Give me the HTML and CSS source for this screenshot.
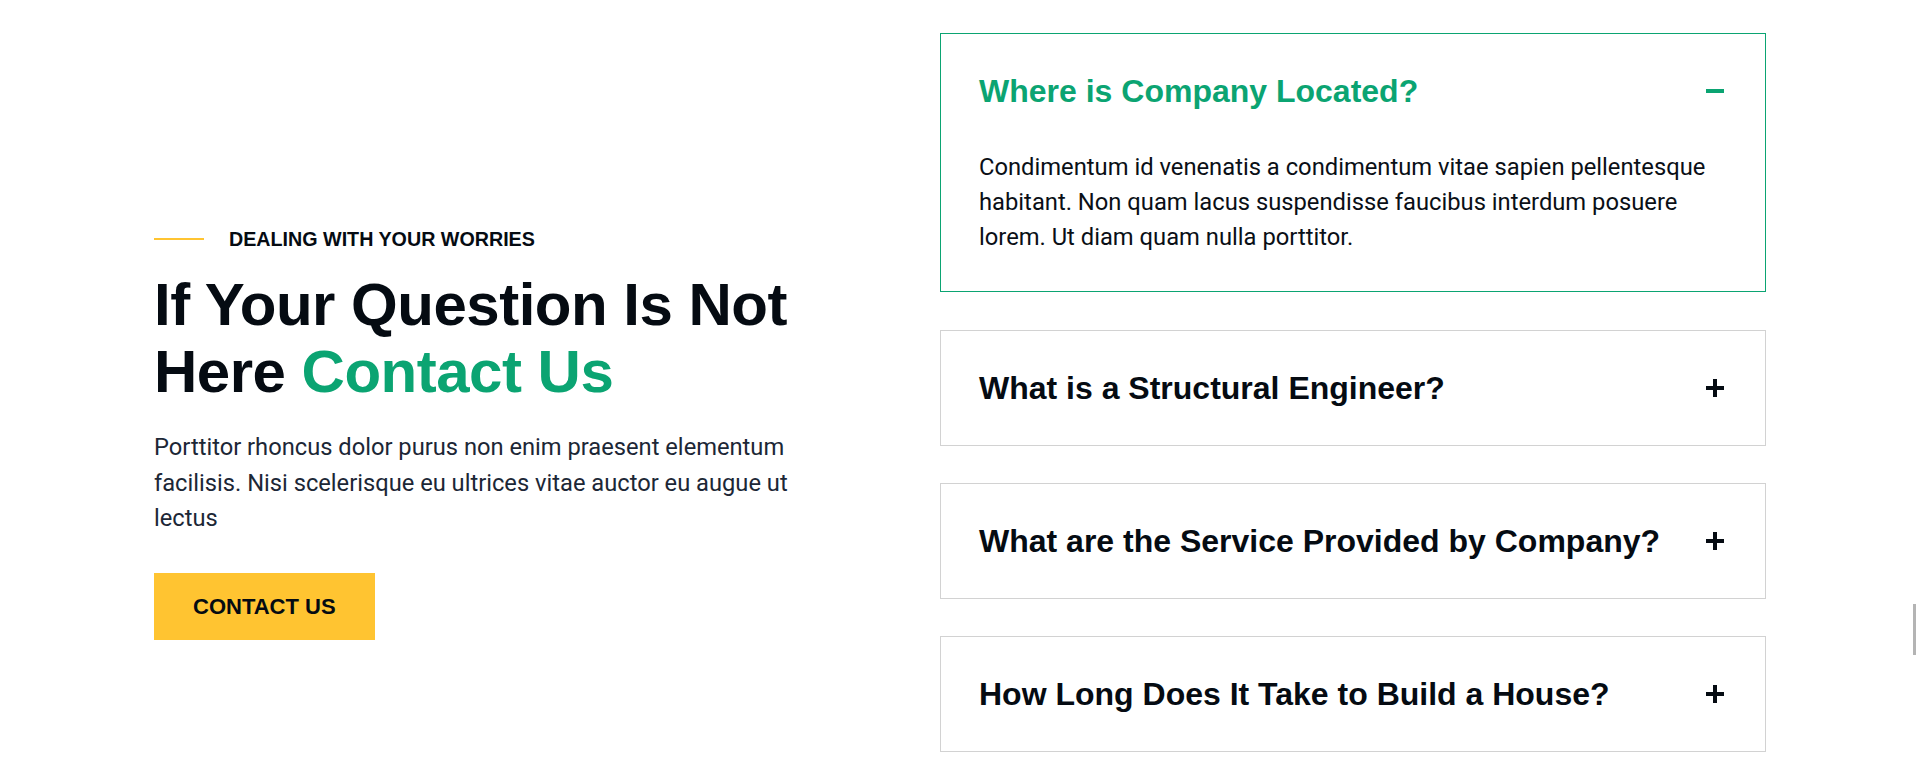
FILE: index.html
```html
<!DOCTYPE html>
<html lang="en">
<head>
<meta charset="utf-8">
<title>FAQ</title>
<link rel="stylesheet" href="styles.css">
</head>
<body>
<section class="faq-section">
  <div class="intro">
    <div class="subtitle">
      <span class="subtitle-line"></span>
      <span class="subtitle-text">DEALING WITH YOUR WORRIES</span>
    </div>
    <h2 class="intro-title">If Your Question Is Not Here <span class="accent">Contact Us</span></h2>
    <p class="intro-text">Porttitor rhoncus dolor purus non enim praesent elementum facilisis. Nisi scelerisque eu ultrices vitae auctor eu augue ut lectus</p>
    <a class="btn" href="#">CONTACT US</a>
  </div>

  <div class="faq">
    <div class="faq-item open">
      <div class="faq-head">
        <h3 class="faq-title">Where is Company Located?</h3>
        <svg class="faq-icon" width="18" height="18" viewBox="0 0 18 18"><rect x="0" y="7" width="18" height="4" fill="#0ba472"/></svg>
      </div>
      <div class="faq-body">
        <p>Condimentum id venenatis a condimentum vitae sapien pellentesque habitant. Non quam lacus suspendisse faucibus interdum posuere lorem. Ut diam quam nulla porttitor.</p>
      </div>
    </div>
    <div class="faq-item">
      <div class="faq-head">
        <h3 class="faq-title">What is a Structural Engineer?</h3>
        <svg class="faq-icon" width="18" height="18" viewBox="0 0 18 18"><rect x="0" y="7" width="18" height="4" fill="#050b12"/><rect x="7" y="0" width="4" height="18" fill="#050b12"/></svg>
      </div>
    </div>
    <div class="faq-item">
      <div class="faq-head">
        <h3 class="faq-title">What are the Service Provided by Company?</h3>
        <svg class="faq-icon" width="18" height="18" viewBox="0 0 18 18"><rect x="0" y="7" width="18" height="4" fill="#050b12"/><rect x="7" y="0" width="4" height="18" fill="#050b12"/></svg>
      </div>
    </div>
    <div class="faq-item">
      <div class="faq-head">
        <h3 class="faq-title">How Long Does It Take to Build a House?</h3>
        <svg class="faq-icon" width="18" height="18" viewBox="0 0 18 18"><rect x="0" y="7" width="18" height="4" fill="#050b12"/><rect x="7" y="0" width="4" height="18" fill="#050b12"/></svg>
      </div>
    </div>
  </div>
</section>
<div class="scroll-indicator"></div>
</body>
</html>
```

FILE: styles.css
```css
* { box-sizing: border-box; }

html, body {
  margin: 0;
  padding: 0;
  background: #ffffff;
}

body {
  font-family: "Roboto", "Liberation Sans", sans-serif;
  color: #0a0f16;
  overflow: hidden;
  height: 774px;
}

.faq-section {
  display: grid;
  grid-template-columns: 660px 826px;
  column-gap: 126px;
  padding: 33px 153px 0 154px;
  align-items: start;
}

/* Left column */
.intro {
  padding-top: 194px;
}

.subtitle {
  display: flex;
  align-items: center;
  gap: 25px;
  height: 24px;
}

.subtitle-line {
  width: 50px;
  height: 2px;
  background: #ffc431;
}

.subtitle-text {
  font-family: "Liberation Sans", Arial, sans-serif;
  font-weight: 700;
  font-size: 19.7px;
  line-height: 24px;
  color: #050b12;
}

.intro-title {
  margin: 20px 0 0;
  font-family: "Liberation Sans", Arial, sans-serif;
  font-weight: 700;
  font-size: 60px;
  line-height: 67px;
  letter-spacing: -0.5px;
  color: #050b12;
}

.accent {
  color: #0ba472;
}

.intro-text {
  margin: 25px 0 0;
  font-size: 23.7px;
  line-height: 35.5px;
  color: #1c2736;
}

.btn {
  display: inline-block;
  margin-top: 36px;
  padding: 20px 39px 20px 39px;
  background: #ffc431;
  font-family: "Liberation Sans", Arial, sans-serif;
  font-weight: 700;
  font-size: 22px;
  line-height: 27px;
  color: #050b12;
  text-decoration: none;
}

/* Accordion */
.faq-item {
  border: 1px solid #d2d2d2;
  margin-bottom: 37px;
}

.faq-item:last-child {
  margin-bottom: 0;
}

.faq-item.open {
  border-color: #0ba472;
  margin-bottom: 38px;
}

.faq-head {
  display: flex;
  align-items: center;
  justify-content: space-between;
  gap: 20px;
  padding: 35px 41px 35px 38px;
}

.faq-title {
  margin: 0;
  font-family: "Liberation Sans", Arial, sans-serif;
  font-weight: 700;
  font-size: 32px;
  line-height: 44px;
  color: #050b12;
}

.faq-item.open .faq-title {
  color: #0ba472;
}

.faq-icon {
  flex: none;
  display: block;
}

.faq-body {
  padding: 2px 41px 35px 38px;
}

.faq-body p {
  margin: 0;
  font-size: 23.75px;
  line-height: 35.2px;
  color: #0a0f16;
}

.scroll-indicator {
  position: fixed;
  right: 3px;
  top: 604px;
  width: 3px;
  height: 51px;
  background: #b4b4b4;
}
```
